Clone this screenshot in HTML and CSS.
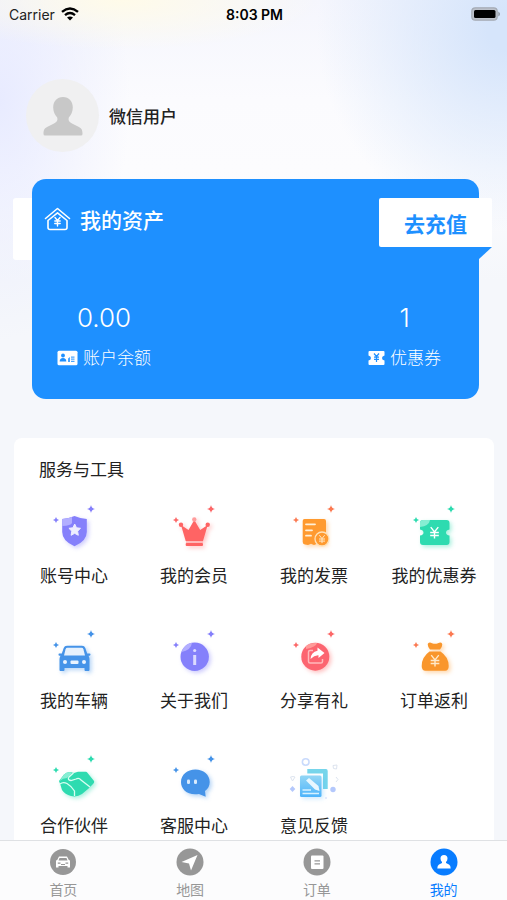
FILE: index.html
```html
<!DOCTYPE html>
<html lang="zh-CN">
<head>
    <meta charset="UTF-8">
    <meta name="viewport" content="width=device-width, initial-scale=1.0">
    <title>我的</title>
    <link rel="stylesheet" href="styles.css">
</head>
<body>
    <svg class="symbols" aria-hidden="true">
        <symbol id="stars" viewBox="0 0 48 48">
            <path d="M41 2 Q41.600 5.400 45 6 Q41.600 6.600 41 10 Q40.400 6.600 37 6 Q40.400 5.400 41 2Z M6 14 Q6.500 16.500 9 17 Q6.500 17.500 6 20 Q5.500 17.500 3 17 Q5.500 16.500 6 14Z" fill="currentColor"/>
        </symbol>
        <symbol id="yen" viewBox="0 0 12 12">
            <path d="M2.500 1 6 5.500 9.500 1M6 5.500V11.500M2 6H10M2 8.800H10" fill="none" stroke="currentColor" stroke-width="1.300"/>
        </symbol>
    </svg>

    <main class="page">
        <header class="header">
            <div class="status-bar">
                <div class="carrier">
                    <span>Carrier</span>
                    <svg width="18" height="14" viewBox="0 0 18 14" fill="none" stroke="#000" stroke-width="2.400">
                        <path d="M1 4.800 Q9 -2 17 4.800M4 8.200 Q9 4 14 8.200"/>
                        <path d="M9 13.500 6 10.500 Q9 8.300 12 10.500Z" fill="#000" stroke="none"/>
                    </svg>
                </div>
                <time class="clock">8:03 PM</time>
                <div class="battery">
                    <svg width="31" height="14" viewBox="0 0 31 14">
                        <rect x="2.800" y=".8" width="25.400" height="12.400" rx="3.500" fill="#bcc1ca" stroke="#a5abb5" stroke-width="1.200"/>
                        <rect x="5" y="3" width="21.500" height="8" rx="1.500" fill="#000"/>
                        <path d="M29.300 4.500 Q31 5.500 31 7 Q31 8.500 29.300 9.500Z" fill="#9298a3"/>
                    </svg>
                </div>
            </div>
            <div class="user">
                <div class="avatar">
                    <svg width="40" height="40" viewBox="0 0 40 40" fill="#c8c8c8">
                        <path d="M20 1C26 1 29.800 5.500 29.800 11.500C29.800 16 28 19 25.800 21.500C25 24 26 26 29 27.500L36 31C39 32.700 39.500 34.500 39.500 38Q39.500 39.500 38 39.500H2Q.5 39.500 .5 38C.5 34.500 1 32.700 4 31L11 27.500C14 26 15 24 14.200 21.500C12 19 10.200 16 10.200 11.500C10.200 5.500 14 1 20 1Z"/>
                    </svg>
                </div>
                <span class="user-name">微信用户</span>
            </div>
        </header>

        <section class="assets">
            <div class="assets-card">
                <div class="assets-head">
                    <h2 class="assets-title">
                        <svg width="27" height="24" viewBox="0 0 27 24" fill="none" stroke="#fff" stroke-width="1.600" stroke-linecap="round" stroke-linejoin="round">
                            <path d="M1.500 11.500 13.500 1.500 25.500 11.500"/>
                            <path d="M4 13.500V20.500Q4 22.500 6 22.500H21Q23 22.500 23 20.500V13.500L13.500 5.800Z"/>
                            <path d="M11 10.500 13.500 13.500 16 10.500M13.500 13.500V19M10.800 14H16.200M10.800 16.500H16.200" stroke-width="1.400"/>
                        </svg>
                        我的资产
                    </h2>
                    <button class="recharge" type="button">去充值</button>
                </div>
                <div class="assets-data">
                    <div class="asset">
                        <strong class="asset-value">0.00</strong>
                        <span class="asset-label">
                            <svg width="21" height="16" viewBox="0 0 21 16">
                                <rect x=".5" y=".8" width="20" height="14.400" rx="1.500" fill="#fff"/>
                                <g fill="#1e90ff">
                                    <circle cx="6" cy="5.500" r="1.900"/>
                                    <path d="M2.700 11.500Q2.700 8 6 8Q9.300 8 9.300 11.500Z"/>
                                    <path d="M11 8.500 13 7V12H11ZM14 6.500H17.500V7.800H14ZM14 8.600H17.500V9.800H14ZM14 10.700H17.500V12H14Z" opacity=".8"/>
                                </g>
                            </svg>
                            账户余额
                        </span>
                    </div>
                    <div class="asset">
                        <strong class="asset-value">1</strong>
                        <span class="asset-label">
                            <svg width="17" height="16" viewBox="0 0 17 16">
                                <path d="M1.500 1H15.500Q16.500 1 16.500 2V5.500Q14 6 14 8Q14 10 16.500 10.500V14Q16.500 15 15.500 15H1.500Q.5 15 .5 14V10.500Q3 10 3 8Q3 6 .5 5.500V2Q.5 1 1.500 1Z" fill="#fff"/>
                                <path d="M6 3.500 8.500 6.500 11 3.500M8.500 6.500V12M6 7.200H11M6 9.400H11" fill="none" stroke="#1e90ff" stroke-width="1.200"/>
                            </svg>
                            优惠券
                        </span>
                    </div>
                </div>
            </div>
        </section>

        <section class="services">
            <h2 class="services-title">服务与工具</h2>
            <nav class="services-grid">
                <a class="service purple" href="#account">
                    <svg class="service-icon" viewBox="0 0 48 48">
                        <use href="#stars"/>
                        <path class="glow" d="M24.500 13 Q30 15.500 36.800 16V29Q36.800 38 24.500 43.200Q12.200 38 12.200 29V16Q19 15.500 24.500 13Z" fill="#8580fb"/>
                        <path d="M12.200 16Q18 15.500 22 14V20Q21 22.500 12.200 23Z" fill="#b2aeff"/>
                        <path d="M24.700 21 26.500 24.800 30.500 25.300 27.600 28.200 28.300 32.300 24.700 30.300 21.100 32.300 21.800 28.200 18.900 25.300 22.900 24.800Z" fill="#eef" stroke="#eef" stroke-linejoin="round"/>
                    </svg>
                    账号中心
                </a>
                <a class="service red" href="#member">
                    <svg class="service-icon" viewBox="0 0 48 48">
                        <use href="#stars"/>
                        <g class="glow" fill="#ff6464">
                            <path d="M11 22 18.500 27 24.300 17 30.200 27 37.700 22 33 38H15.700Z"/>
                            <circle cx="11" cy="21.700" r="2.200"/>
                            <circle cx="37.700" cy="21.700" r="2.200"/>
                            <circle cx="24.300" cy="16.500" r="2.200" fill="#ff9c9c"/>
                            <rect x="15.700" y="40" width="17.300" height="3" rx="1"/>
                        </g>
                        <path d="M16 39H33" stroke="#ffb3b3" stroke-width="1.600"/>
                    </svg>
                    我的会员
                </a>
                <a class="service orange" href="#invoice">
                    <svg class="service-icon" viewBox="0 0 48 48">
                        <use href="#stars"/>
                        <path class="glow" d="M14.500 16H34Q36 16 36 18V42L33 40.800 30 42 27 40.800 24 42 21 40.800 18 42 15 41.500Q12.700 41 12.700 39V18Q12.700 16 14.500 16Z" fill="#ff9a2f"/>
                        <path d="M16 21.300H25M16 27.300H22M16 32.700H21" stroke="#fff0d8" stroke-width="1.800" stroke-linecap="round"/>
                        <circle cx="32" cy="36" r="7" fill="#ff9a2f" stroke="#ffe2b8" stroke-width="1.300"/>
                        <use href="#yen" x="27.500" y="31.500" width="9" height="9" color="#ffe9c9"/>
                    </svg>
                    我的发票
                </a>
                <a class="service green" href="#coupon">
                    <svg class="service-icon" viewBox="0 0 48 48">
                        <use href="#stars"/>
                        <path class="glow" d="M13 17H36.500Q39.500 17 39.500 20V26.500Q36 27 36 29.500Q36 32 39.500 32.500V39Q39.500 42 36.500 42H13Q10 42 10 39V32.500Q13.500 32 13.500 29.500Q13.500 27 10 26.500V20Q10 17 13 17Z" fill="#2edbb0"/>
                        <path d="M13 17H20Q19 23 10 24V20Q10 17 13 17Z" fill="#86eed3"/>
                        <use href="#yen" x="18" y="23" width="13" height="13" color="#fff"/>
                    </svg>
                    我的优惠券
                </a>
                <a class="service blue" href="#cars">
                    <svg class="service-icon" viewBox="0 0 48 48">
                        <use href="#stars"/>
                        <path class="glow" d="M17 17.700H32Q34.500 17.700 35.300 20L37.200 25.500H39.500Q40.500 25.500 40.500 26.500T39.500 27.800H38.500Q39.500 29.500 39.500 31V42Q39.500 43 38.500 43H35.500Q34.500 43 34.500 42V40H14.500V42Q14.500 43 13.500 43H10.500Q9.500 43 9.500 42V31Q9.500 29.500 10.500 27.800H9.500Q8.500 27.800 8.500 26.500T9.500 25.500H11.800L13.700 20Q14.500 17.700 17 17.700Z" fill="#4593e8"/>
                        <path d="M17.500 19.800H31.500Q33 19.800 33.400 21.200L35 27.500H14L15.600 21.200Q16 19.800 17.500 19.800Z" fill="#e6f1fd"/>
                        <circle cx="15" cy="34" r="2" fill="#e8f3ff"/>
                        <circle cx="34" cy="34" r="2" fill="#e8f3ff"/>
                        <rect x="20.500" y="32.500" width="8" height="3.500" rx="1" fill="#e8f3ff"/>
                    </svg>
                    我的车辆
                </a>
                <a class="service purple" href="#about">
                    <svg class="service-icon" viewBox="0 0 48 48">
                        <use href="#stars"/>
                        <circle class="glow" cx="24.700" cy="28.700" r="14.200" fill="#8580fb"/>
                        <path d="M11.500 24Q14 16 22 14.800Q21 22.500 11.500 24Z" fill="#b2aeff"/>
                        <circle cx="24.700" cy="22.500" r="1.600" fill="#dcdaff"/>
                        <path d="M24.700 27V37" stroke="#dcdaff" stroke-width="3"/>
                    </svg>
                    关于我们
                </a>
                <a class="service red" href="#share">
                    <svg class="service-icon" viewBox="0 0 48 48">
                        <use href="#stars"/>
                        <circle class="glow" cx="25.300" cy="28.700" r="14" fill="#fc6570"/>
                        <path d="M16 18Q20 14.500 27 15Q26 19 16 21Z" fill="#ff9a98"/>
                        <path d="M23 22.500H20Q18.500 22.500 18.500 24V33.500Q18.500 35 20 35H31Q32.500 35 32.500 33.500V31" fill="none" stroke="#ffb9bb" stroke-width="1.500"/>
                        <path d="M27.500 19.500 34.500 25 28.500 30V27.300Q24.500 27 20.500 31Q21 24 27.500 22.800Z" fill="#fff"/>
                    </svg>
                    分享有礼
                </a>
                <a class="service orange" href="#rebate">
                    <svg class="service-icon" viewBox="0 0 48 48">
                        <use href="#stars"/>
                        <g class="glow" fill="#f9962c">
                            <path d="M20 21.500Q17 17.500 18 15.500Q19.500 13.800 22 15.200Q25 16.500 28 15.200Q31 13.800 32 15.500Q33 18 30 21.500Z"/>
                            <path d="M19.500 23.500H30.500Q38.700 29 38.700 38Q38.700 42.700 35 42.700H15.500Q11.700 42.700 11.700 38Q11.700 29 19.500 23.500Z"/>
                        </g>
                        <use href="#yen" x="18.500" y="26" width="13" height="13" color="#ffe9c9"/>
                    </svg>
                    订单返利
                </a>
                <a class="service green" href="#partner">
                    <svg class="service-icon" viewBox="0 0 48 48">
                        <use href="#stars"/>
                        <path class="glow" d="M9 28 14 21.500Q16 19 20 19L24 20 28 18.800H36Q37 19 38 20.500L44 28Q44.500 29.500 43 31L38 36 32 41Q27 44.500 21 43Q15 41.500 12 37L10.500 32Z" fill="#2edbb0"/>
                        <path d="M14 21.500Q16 19 20 19L22 20 17 25Q13 25 9.500 28Z" fill="#86eed3"/>
                        <path d="M10 31Q13 28.500 17 30.500Q22 33.500 24.500 38V43M23.500 20 19 24Q17 27 21 27.500L26 26Q29 24.500 31 27L40 34" fill="none" stroke="#d8fff2" stroke-width="1.300"/>
                    </svg>
                    合作伙伴
                </a>
                <a class="service blue" href="#support">
                    <svg class="service-icon" viewBox="0 0 48 48">
                        <use href="#stars"/>
                        <path class="glow" d="M25.300 16.500C33.500 16.500 39.700 21.500 39.700 29C39.700 33 38 36 35 38L35.700 43.700 29 41C18 43 11 36.500 11 29C11 21.500 17.500 16.500 25.300 16.500Z" fill="#4593e8"/>
                        <rect x="17" y="26.500" width="3" height="4.500" rx="1.300" fill="#d9eafc"/>
                        <rect x="24" y="26.500" width="3" height="4.500" rx="1.300" fill="#d9eafc"/>
                    </svg>
                    客服中心
                </a>
                <a class="service sky" href="#feedback">
                    <svg class="service-icon" viewBox="0 0 48 48">
                        <defs>
                            <linearGradient id="note" x1="0" y1="0" x2="0" y2="1">
                                <stop offset="0" stop-color="#93d6f5"/>
                                <stop offset="1" stop-color="#4db4fb"/>
                            </linearGradient>
                        </defs>
                        <path d="M17.300 16H36Q37.700 16 37.700 18V36H33V20.500H17.300Z" fill="#76d5eb"/>
                        <rect class="glow" x="10" y="22.500" width="21.500" height="21.500" rx="1.500" fill="url(#note)"/>
                        <path d="M16 27.500 19 25 28.500 33 29.500 38 25 36.500Z" fill="#e8f7ff"/>
                        <path d="M12.500 37H21M12.500 40.500H29" stroke="#d6f1ff" stroke-width="1.500"/>
                        <g fill="none" stroke="#c9dafc">
                            <circle cx="15.700" cy="9" r="3.300" stroke-width="1.600"/>
                            <path d="M43 12.500 47 12 46.500 16 43.500 15.500ZM46 24 48 26.500 46 29M.5 24 2.500 28 5 24 3 23.500Z" stroke="#dde4ef"/>
                        </g>
                        <path d="M2.500 33 5.300 36 2.500 39 -.3 36Z" fill="#b4c8fc"/>
                        <circle cx="43" cy="36.500" r="2.700" fill="#b4c8fc"/>
                        <circle cx="36" cy="45" r="1" fill="#dde4fb"/>
                    </svg>
                    意见反馈
                </a>
            </nav>
        </section>
    </main>

    <nav class="tab-bar">
        <a class="tab" href="#home">
            <svg class="tab-icon" viewBox="0 0 28 28">
                <circle cx="14" cy="14" r="13" fill="currentColor"/>
                <path d="M10 8.500H18L19.800 12 21 12.500V19.500H18.500V18H9.500V19.500H7V12.500L8.200 12Z" fill="#fff"/>
                <path d="M10.500 10H17.500L18.500 12.500H9.500ZM8.800 14.500H11.500V15.800H8.800ZM16.500 14.500H19.200V15.800H16.500ZM12 16H16V17H12Z" fill="currentColor"/>
            </svg>
            首页
        </a>
        <a class="tab" href="#map">
            <svg class="tab-icon" viewBox="0 0 28 28">
                <circle cx="14" cy="14" r="13.500" fill="currentColor"/>
                <path d="M21.500 7 15 22.500 13 15.500 5.500 14Z" fill="#fff"/>
            </svg>
            地图
        </a>
        <a class="tab" href="#orders">
            <svg class="tab-icon" viewBox="0 0 28 28">
                <circle cx="14" cy="14" r="13.500" fill="currentColor"/>
                <rect x="8" y="7.500" width="12.500" height="13.500" rx="1" fill="#fff"/>
                <path d="M11.500 12.800H17M11.500 15.800H17" stroke="currentColor" stroke-width="1.200"/>
            </svg>
            订单
        </a>
        <a class="tab active" href="#mine" aria-current="page">
            <svg class="tab-icon" viewBox="0 0 28 28">
                <circle cx="14" cy="14" r="13.500" fill="currentColor"/>
                <path d="M14 7Q17.500 7 17.500 10.500Q17.500 12.500 16 14V15L19 16.500Q20.700 17.500 20.700 20.500H7.300Q7.300 17.500 9 16.500L12 15V14Q10.500 12.500 10.500 10.500Q10.500 7 14 7Z" fill="#fff"/>
            </svg>
            我的
        </a>
    </nav>
</body>
</html>
```

FILE: styles.css
```css
* {
    box-sizing: border-box;
}
body {
    font-family: Inter, "Noto Sans CJK SC", sans-serif;
    display: flex;
    flex-direction: column;
    height: 100vh;
    margin: 0;
    background-color: #f5f7fb;
    color: #222;
}
a {
    color: inherit;
    text-decoration: none;
}
h2 {
    margin: 0;
    font-weight: 400;
}
svg {
    flex-shrink: 0;
}
.symbols {
    position: absolute;
    width: 0;
    height: 0;
}
.page {
    flex: 1;
    min-height: 0;
    overflow-y: auto;
    scrollbar-width: none;
    background:
        radial-gradient(ellipse 200px 50px at 24% 0, #fffbe9, transparent) no-repeat,
        radial-gradient(ellipse 190px 200px at 100% 30px, #d6e5fb 10%, transparent) no-repeat,
        radial-gradient(ellipse 130px 240px at 0 100px, #e8ebff, transparent) no-repeat,
        linear-gradient(#f5f6fd, #fbfbfe 100px, #fcfcfe 170px, #f5f7fb 280px);
}

/* 顶部 */
.status-bar {
    display: grid;
    grid-template-columns: 1fr auto 1fr;
    align-items: center;
    height: 28px;
    padding: 0 7px 0 9px;
    font-size: 14px;
}
.carrier {
    display: flex;
    align-items: center;
    gap: 6px;
}
.clock {
    font-weight: 600;
    color: #000;
}
.battery {
    display: flex;
    justify-content: flex-end;
}
.user {
    display: flex;
    align-items: center;
    gap: 10px;
    padding: 51px 26px 27px;
}
.avatar {
    display: flex;
    align-items: center;
    justify-content: center;
    width: 73px;
    height: 73px;
    border-radius: 50%;
    background-color: #f0f0f1;
}
.user-name {
    font-size: 17px;
    font-weight: 500;
}

/* 我的资产 */
.assets {
    position: relative;
    padding: 0 28px 0 32px;
}
.assets::before {
    content: "";
    position: absolute;
    left: 13px;
    top: 19px;
    width: 24px;
    height: 62px;
    border-radius: 3px;
    background-color: #fff;
}
.assets-card {
    position: relative;
    padding: 19px 0 28px;
    border-radius: 14px;
    background-color: #1e90ff;
    color: #fff;
}
.assets-head {
    display: flex;
    align-items: flex-start;
    justify-content: space-between;
    padding-left: 12px;
    margin-right: -13px;
}
.assets-title {
    display: flex;
    align-items: center;
    gap: 9px;
    height: 42px;
    font-size: 21px;
    font-weight: 500;
}
.recharge {
    position: relative;
    width: 113px;
    height: 49px;
    border: none;
    border-radius: 2px 2px 0 2px;
    background-color: #fff;
    color: #1e90ff;
    font-family: inherit;
    font-size: 21px;
    font-weight: 700;
    cursor: pointer;
}
.recharge::after {
    content: "";
    position: absolute;
    right: 0;
    top: 100%;
    border-top: 12px solid #1e90ff;
    border-right: 13px solid transparent;
}
.assets-data {
    display: flex;
    justify-content: space-between;
    padding: 52px 38px 0 25px;
}
.asset {
    display: flex;
    flex-direction: column;
    align-items: center;
    gap: 8px;
}
.asset-value {
    font-size: 26px;
    font-weight: 300;
    line-height: 38px;
}
.asset-label {
    display: flex;
    align-items: center;
    gap: 5px;
    font-size: 17px;
    font-weight: 300;
    line-height: 26px;
}

/* 服务与工具 */
.services {
    margin: 39px 13px 20px 14px;
    padding-top: 18px;
    border-radius: 8px;
    background-color: #fff;
}
.services-title {
    padding-left: 25px;
    font-size: 17px;
    line-height: 28px;
}
.services-grid {
    display: grid;
    grid-template-columns: repeat(4, 1fr);
    row-gap: 38px;
    padding: 19px 0 30px;
}
.service {
    display: flex;
    flex-direction: column;
    align-items: center;
    gap: 11px;
    font-size: 17px;
    line-height: 28px;
}
.service-icon {
    width: 48px;
    height: 48px;
    overflow: visible;
    color: var(--tint);
}
.glow {
    filter: drop-shadow(2px 2px 2px var(--glow));
}
.purple {
    --tint: #8580fb;
    --glow: #8580fb66;
}
.red {
    --tint: #fc6868;
    --glow: #ff646466;
}
.orange {
    --tint: #fb7a52;
    --glow: #ff9a2f66;
}
.green {
    --tint: #2edbb0;
    --glow: #2edbb066;
}
.blue {
    --tint: #4593e8;
    --glow: #4593e866;
}
.sky {
    --glow: #4db4fb44;
}

/* 底部导航 */
.tab-bar {
    display: grid;
    grid-template-columns: repeat(4, 1fr);
    height: 60px;
    border-top: 1px solid #dfe1e4;
    background-color: #fcfcfd;
}
.tab {
    display: flex;
    flex-direction: column;
    align-items: center;
    padding-top: 7px;
    gap: 4px;
    color: #979797;
    font-size: 14px;
    line-height: 20px;
}
.tab-icon {
    width: 28px;
    height: 28px;
}
.tab.active {
    color: #087cff;
}
```
